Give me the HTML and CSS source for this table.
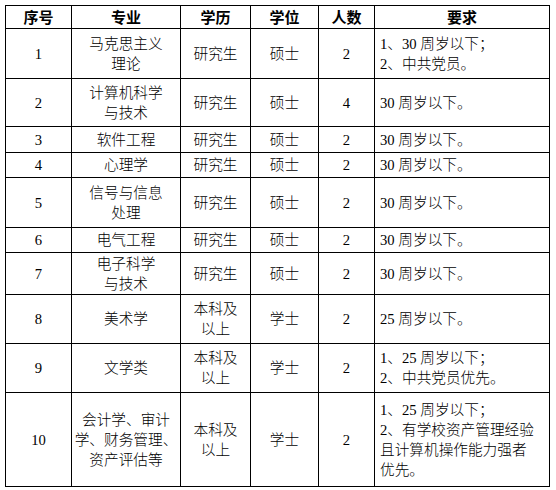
FILE: index.html
```html
<!DOCTYPE html>
<html lang="zh-CN">
<head>
<meta charset="utf-8">
<title>招聘岗位</title>
<link rel="stylesheet" href="styles.css">
</head>
<body>
<div class="page">
<table class="jobs">
  <colgroup>
    <col class="c-no">
    <col class="c-major">
    <col class="c-edu">
    <col class="c-deg">
    <col class="c-num">
    <col class="c-req">
  </colgroup>
  <thead>
    <tr class="h-head">
      <th>序号</th><th>专业</th><th>学历</th><th>学位</th><th>人数</th><th>要求</th>
    </tr>
  </thead>
  <tbody>
    <tr class="h-50">
      <td>1</td><td>马克思主义<br>理论</td><td>研究生</td><td>硕士</td><td>2</td>
      <td class="req">1、30 周岁以下；<br>2、中共党员。</td>
    </tr>
    <tr class="h-48">
      <td>2</td><td>计算机科学<br>与技术</td><td>研究生</td><td>硕士</td><td>4</td>
      <td class="req">30 周岁以下。</td>
    </tr>
    <tr class="h-26">
      <td>3</td><td>软件工程</td><td>研究生</td><td>硕士</td><td>2</td>
      <td class="req">30 周岁以下。</td>
    </tr>
    <tr class="h-25">
      <td>4</td><td>心理学</td><td>研究生</td><td>硕士</td><td>2</td>
      <td class="req">30 周岁以下。</td>
    </tr>
    <tr class="h-50">
      <td>5</td><td>信号与信息<br>处理</td><td>研究生</td><td>硕士</td><td>2</td>
      <td class="req">30 周岁以下。</td>
    </tr>
    <tr class="h-25">
      <td>6</td><td>电气工程</td><td>研究生</td><td>硕士</td><td>2</td>
      <td class="req">30 周岁以下。</td>
    </tr>
    <tr class="h-42">
      <td>7</td><td>电子科学<br>与技术</td><td>研究生</td><td>硕士</td><td>2</td>
      <td class="req">30 周岁以下。</td>
    </tr>
    <tr class="h-49">
      <td>8</td><td>美术学</td><td>本科及<br>以上</td><td>学士</td><td>2</td>
      <td class="req">25 周岁以下。</td>
    </tr>
    <tr class="h-49">
      <td>9</td><td>文学类</td><td>本科及<br>以上</td><td>学士</td><td>2</td>
      <td class="req">1、25 周岁以下；<br>2、中共党员优先。</td>
    </tr>
    <tr class="h-94">
      <td>10</td><td>会计学、审计<br>学、财务管理、<br>资产评估等</td><td>本科及<br>以上</td><td>学士</td><td>2</td>
      <td class="req">1、25 周岁以下；<br>2、有学校资产管理经验<br>且计算机操作能力强者<br>优先。</td>
    </tr>
  </tbody>
</table>
</div>
</body>
</html>
```
FILE: styles.css
```css
html, body {
  margin: 0;
  padding: 0;
  background: #fff;
}
.page {
  padding: 5px;
}
.jobs {
  border-collapse: collapse;
  table-layout: fixed;
  width: 544px;
  font-family: "Liberation Serif", "Noto Sans CJK SC", serif;
  font-size: 14.67px;
  font-weight: 300;
  line-height: 20px;
  color: #000;
}
.c-no { width: 66px; }
.c-major { width: 109px; }
.c-edu { width: 70px; }
.c-deg { width: 68px; }
.c-num { width: 56px; }
.c-req { width: 175px; }
.jobs th, .jobs td {
  border: 1px solid #000;
  padding: 0 2px;
  text-align: center;
  vertical-align: middle;
  white-space: nowrap;
  box-sizing: border-box;
}
.jobs th {
  font-family: "Noto Sans CJK SC", sans-serif;
  font-weight: bold;
  font-size: 15px;
}
.jobs td.req {
  text-align: left;
  padding-left: 5px;
}
.h-head { height: 23px; }
.h-50 { height: 50px; }
.h-48 { height: 48px; }
.h-26 { height: 26px; }
.h-25 { height: 25px; }
.h-42 { height: 42px; }
.h-49 { height: 49px; }
.h-94 { height: 94px; }
```
